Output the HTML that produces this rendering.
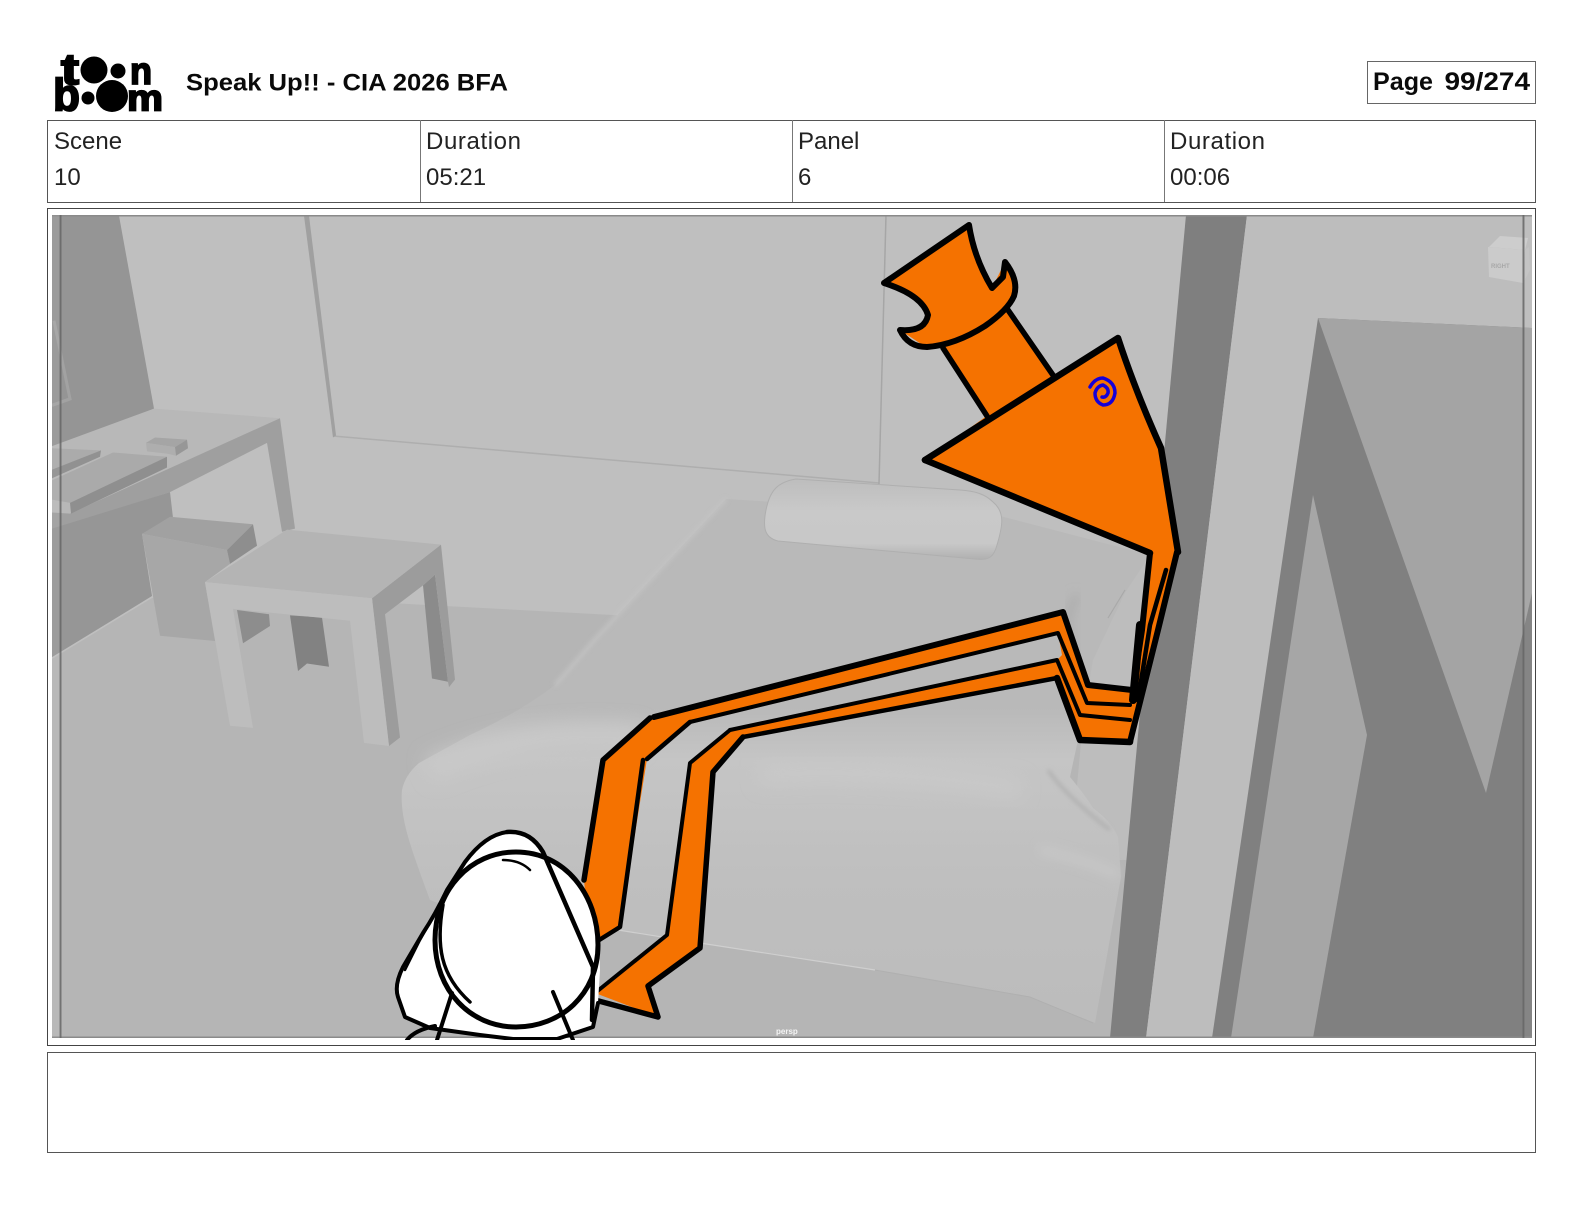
<!DOCTYPE html>
<html lang="en"><head><meta charset="utf-8"><title>Speak Up!! - CIA 2026 BFA</title>
<style>
html,body{margin:0;padding:0;background:#fff;width:1584px;height:1224px;overflow:hidden}
svg{display:block}
text{font-family:"Liberation Sans",sans-serif}
</style></head><body>
<svg xmlns="http://www.w3.org/2000/svg" width="1584" height="1224" viewBox="0 0 1584 1224">
<defs>
<clipPath id="img"><rect x="52" y="215" width="1480" height="823"/></clipPath>
<clipPath id="low"><rect x="300" y="700" width="400" height="340"/></clipPath>
<filter id="b2" x="-30%" y="-30%" width="160%" height="160%"><feGaussianBlur stdDeviation="2"/></filter>
<filter id="b4" x="-30%" y="-50%" width="160%" height="200%"><feGaussianBlur stdDeviation="5"/></filter>
<filter id="b9" x="-30%" y="-100%" width="160%" height="300%"><feGaussianBlur stdDeviation="9"/></filter>
<linearGradient id="pil" x1="0" y1="0" x2="0" y2="1"><stop offset="0" stop-color="#bdbdbd"/><stop offset=".4" stop-color="#c9c9c9"/><stop offset=".8" stop-color="#c8c8c8"/><stop offset="1" stop-color="#b0b0b0"/></linearGradient>
<linearGradient id="bed" gradientUnits="userSpaceOnUse" x1="0" y1="500" x2="0" y2="1020"><stop offset="0" stop-color="#b9b9b9"/><stop offset=".4" stop-color="#b9b9b9"/><stop offset=".5" stop-color="#c5c5c5"/><stop offset=".58" stop-color="#c3c3c3"/><stop offset=".72" stop-color="#bfbfbf"/><stop offset="1" stop-color="#bcbcbc"/></linearGradient>
</defs>
<rect width="1584" height="1224" fill="#fff"/>

<!-- logo -->
<g fill="#000">
<text x="61" y="84" font-size="44" font-weight="700" stroke="#000" stroke-width="2" textLength="18" lengthAdjust="spacingAndGlyphs">t</text>
<circle cx="94" cy="70" r="13.500"/><circle cx="118" cy="71" r="7.500"/>
<text x="130" y="84" font-size="38" font-weight="700" stroke="#000" stroke-width="1.800" textLength="22" lengthAdjust="spacingAndGlyphs">n</text>
<text x="53" y="110.500" font-size="45" font-weight="700" stroke="#000" stroke-width="1.800" textLength="27" lengthAdjust="spacingAndGlyphs">b</text>
<circle cx="88" cy="98" r="6.500"/><circle cx="112" cy="96" r="16"/>
<text x="127" y="110.500" font-size="37" font-weight="700" stroke="#000" stroke-width="1.800" textLength="36" lengthAdjust="spacingAndGlyphs">m</text>
</g>
<text x="186" y="90.500" font-size="24" font-weight="700" fill="#0a0a0a" textLength="322" lengthAdjust="spacingAndGlyphs">Speak Up!! - CIA 2026 BFA</text>

<!-- page box -->
<rect x="1367.500" y="61.500" width="168" height="42" fill="#fff" stroke="#666" stroke-width="1"/>
<text x="1373" y="90" font-size="25" font-weight="700" fill="#0a0a0a" textLength="60" lengthAdjust="spacingAndGlyphs">Page</text>
<text x="1444.500" y="90" font-size="25" font-weight="700" fill="#0a0a0a" textLength="85.500" lengthAdjust="spacingAndGlyphs">99/274</text>

<!-- info table -->
<rect x="47.500" y="120.500" width="1488" height="82" fill="#fff" stroke="#555" stroke-width="1"/>
<path d="M420.500 120v82M792.500 120v82M1164.500 120v82" stroke="#777" stroke-width="1"/>
<g font-size="24" fill="#222">
<text x="54" y="149">Scene</text><text x="54" y="185">10</text>
<text x="426" y="149" textLength="95" lengthAdjust="spacing">Duration</text><text x="426" y="185">05:21</text>
<text x="798" y="149">Panel</text><text x="798" y="185">6</text>
<text x="1170" y="149" textLength="95" lengthAdjust="spacing">Duration</text><text x="1170" y="185">00:06</text>
</g>

<!-- frame -->
<rect x="47.500" y="208.500" width="1488" height="837" fill="#fff" stroke="#444" stroke-width="1"/>
<rect x="47.500" y="1052.500" width="1488" height="100" fill="#fff" stroke="#555" stroke-width="1"/>

<!-- scene -->
<g clip-path="url(#img)">
<rect x="52" y="215" width="1480" height="823" fill="#bfbfbf"/>
<path d="M52 659 152 598 300 598 445 606 650 617 1130 640V1038H52Z" fill="#b5b5b5"/>
<path d="M333 436 879 483" stroke="#aeaeae" stroke-width="1.500" fill="none"/>
<path d="M886 215 879 484" stroke="#a6a6a6" stroke-width="1.500" fill="none"/>

<g transform="translate(0 205) scale(1 1.0714) translate(0 -205)">
<path d="M52 215H119L154 395 67 430H52Z" fill="#959595"/>
<path d="M304 215H309L336 420 333 422Z" fill="#a0a0a0"/>
<path d="M54 313 70 386 52 392" fill="none" stroke="#a2a2a2" stroke-width="3"/>
<path d="M52 430 154 395 280 404 70 493 52 493Z" fill="#b8b8b8"/>
<path d="M280 404 295 507 282 510 267 427 170 473 52 508V492L70 493Z" fill="#9f9f9f"/>
<path d="M52 507 170 473 173 497 142 512 152 570 52 627Z" fill="#969696"/>
<path d="M52 432 101 434 52 452Z" fill="#ababab"/><path d="M52 452 101 434 100 440 52 460Z" fill="#919191"/>
<path d="M52 462 113 436 167 440 70 483 52 480Z" fill="#aaa"/>
<path d="M70 483 167 440 167 450 71 493Z" fill="#8f8f8f"/>
<path d="M146 427 155 422 187 424 175 431Z" fill="#a5a5a5"/>
<path d="M146 427 175 431 176 439 167 437 147 435Z" fill="#aeaeae"/>
<path d="M175 431 187 424 188 432 176 439Z" fill="#979797"/>
<path d="M142 512 227 527 230 540 205 557 215 612 160 607Z" fill="#a7a7a7"/>
<path d="M142 512 170 496 253 503 227 527Z" fill="#a1a1a1"/>
<path d="M227 527 253 503 257 523 230 540Z" fill="#8e8e8e"/>
<path d="M237 583 269 587 270 598 243 614Z" fill="#8d8d8d"/>
<path d="M290 588 322 590 329 636 307 633 298 640Z" fill="#828282"/>
<path d="M435 550 448 650 432 647 423 560Z" fill="#8b8b8b"/>
<path d="M372 572 441 522 455 648 449 655 448 650 435 550 423 560 385 587 400 702 389 710Z" fill="#9c9c9c"/>
<path d="M205 557 287 508 441 522 372 572Z" fill="#b4b4b4"/>
<path d="M205 557 372 572 389 710 364 707 350 593 233 582 253 693 230 691Z" fill="#bdbdbd"/>
</g>

<path d="M1100 540H1190L1130 860H1070Z" fill="#bdbdbd"/>
<!-- bed -->
<path d="M726 499 L1000 516 L1150 555 L1125 593 L1093 660 L1088 690 L1078 740 L1073 763 L1070 777 Q1085 795 1093 808 Q1110 820 1118 837 L1121 877 L1095 1023 L1030 997 L875 970 L700 943 L618 930 L470 915 L430 900 Q415 860 409 840 Q400 810 402 790 Q405 775 419 763 L470 735 Q520 712 555 685 L594 640 Z" fill="url(#bed)"/>
<path d="M430 770 Q520 728 640 738" stroke="#c9c9c9" stroke-width="24" fill="none" filter="url(#b9)"/>
<path d="M760 775 Q900 768 1020 790" stroke="#c9c9c9" stroke-width="18" fill="none" filter="url(#b9)"/>
<path d="M1040 850 Q1085 860 1118 875" stroke="#c8c8c8" stroke-width="8" fill="none" filter="url(#b4)"/>
<path d="M1048 770 Q1065 795 1110 830" stroke="#aeaeae" stroke-width="3" fill="none" filter="url(#b2)"/>
<path d="M1078 595 Q1060 620 1075 655" stroke="#adadad" stroke-width="8" fill="none" filter="url(#b4)"/>
<path d="M1125 590 1108 618" stroke="#a9a9a9" stroke-width="1.200" fill="none"/>
<path d="M618 930 700 943 875 970" stroke="#cfcfcf" stroke-width="1.200" fill="none"/>
<path d="M875 970 1030 997 1093 1023" stroke="#b0b0b0" stroke-width="1" fill="none"/>
<path d="M726 499 L594 640 L555 685" stroke="#c4c4c4" stroke-width="3" fill="none" filter="url(#b2)"/>
<!-- pillow -->
<path d="M796 479 C778 482 770 490 766 510 C762 530 766 538 778 541 L975 559 C990 561 994 556 997 545 C1003 525 1005 512 993 502 C985 494 975 491 960 490Z" fill="url(#pil)" stroke="#afafaf" stroke-width="1"/>
<!-- pillar -->
<path d="M1186 215H1247L1146 1038H1110Z" fill="#7f7f7f"/>
<path d="M1247 215H1532V1038H1146Z" fill="#bdbdbd"/>
<path d="M1318 318 1532 328V1038H1212Z" fill="#808080"/>
<path d="M1318 318 1532 328V593L1486 793Z" fill="#a4a4a4"/>
<path d="M1313 495 1367 735 1313 1038H1231Z" fill="#a6a6a6"/>
<!-- cube -->
<path d="M1489 247 1500 236 1528 238 1525 250Z" fill="#cdcdcd"/>
<path d="M1488 247 1525 250 1523 283 1489 277Z" fill="#cbcbcb"/>
<path d="M1525 250 1529 247 1530 270 1523 283Z" fill="#c2c2c2"/>
<text x="1491" y="268" font-size="6" font-weight="700" fill="#a8a8a8">RIGHT</text>
<!-- gate -->
<rect x="52" y="215" width="1480" height="1.500" fill="#8a8a8a"/>
<rect x="52" y="1036.500" width="1480" height="1.500" fill="#8a8a8a"/>
<rect x="59.500" y="215" width="2" height="823" fill="#666" opacity=".85"/>
<rect x="1522.500" y="215" width="2" height="823" fill="#666" opacity=".85"/>
<rect x="52" y="215" width="8" height="823" fill="#fff" opacity=".06"/>
<rect x="1524" y="215" width="8" height="823" fill="#fff" opacity=".04"/>
<text x="776" y="1034" font-size="8" font-weight="700" fill="#f4f4f4">persp</text>
</g>

<!-- orange figure -->
<g stroke-linecap="round" stroke-linejoin="round">
<path fill="#f57200" d="M883 283 970 223 973 248 992 288 1005 262 1017 285 1008 308 1055 378 1118 338 1162 448 1178 552 1130 742 1080 740 1057 678 743 737 713 772 700 948 648 986 658 1017 595 993 667 935 690 763 730 730 1057 660 1062 655 1058 633 690 722 647 759 620 927 590 945 584 880 603 760 653 717 1063 612 1088 685 1132 690 1150 552 925 460 988 415 943 348 927 348 900 330 920 327 928 315 913 293Z"/>
<g fill="none" stroke="#000" stroke-width="6">
<path d="M884 283 Q925 255 969 225 Q974 258 992 288 L1003 277 1005 262 Q1019 280 1014 296 Q1008 310 985 326 Q955 345 927 347 Q908 347 900 330 Q925 332 928 315 Q922 295 884 283Z" />
<path d="M1008 310 1055 378M943 348 987 416" stroke-width="5.500"/>
<path d="M925 460 1118 338 Q1135 390 1161 448 L1178 552" stroke-width="6.500"/>
<path d="M925 460 1150 553" stroke-width="6.500"/>
<path d="M1150 553 1142 630 1133 690" stroke-width="6"/>
<path d="M1177 552 1158 630 1130 742" stroke-width="6"/>
<path d="M1166 570 1150 625 1138 700" stroke-width="4.500"/>
<path d="M1140 625 1133 700" stroke-width="8"/>
<path d="M654 717 1063 612 1088 685 1132 690" stroke-width="6"/>
<path d="M690 722 1058 633 1087 703 1130 705" stroke-width="4"/>
<path d="M730 730 1057 660 1080 715 1130 720" stroke-width="4"/>
<path d="M743 737 1057 678" stroke-width="4.500"/>
<path d="M1057 678 1080 740 1130 742" stroke-width="6.500"/>
<path d="M650 718 603 760 584 880" stroke-width="5.500"/>
<path d="M690 722 647 759" stroke-width="4.500"/>
<path d="M643 760 620 927 596 942" stroke-width="4.500"/>
<path d="M730 730 690 763 667 935 595 993" stroke-width="4"/>
<path d="M743 737 713 772 700 948 648 986 658 1017 595 1000" stroke-width="5.500"/>
</g>
<path d="M1090 387 Q1095 378 1103 378 Q1115 382 1115 393 Q1113 405 1103 405 Q1095 402 1095 393 Q1097 386 1103 385 Q1109 388 1108 393 Q1106 398 1102 397" fill="none" stroke="#1500d8" stroke-width="3.500"/>
</g>

<!-- head -->
<g clip-path="url(#low)" stroke-linecap="round" stroke-linejoin="round">
<path d="M507 832 Q490 834 467 860 Q455 878 447 890 Q435 915 423 933 L403 967 Q396 985 398 997 L405 1017 430 1028 480 1035 513 1040H557L593 1027 598 1003 600 970 Q600 930 578 895 L543 852 Q530 832 507 832Z" fill="#fff"/>
<g fill="none" stroke="#000">
<path d="M516 852 C565 852 598 895 598 945 C598 995 560 1027 516 1027 C470 1027 435 990 435 940 C435 890 470 852 516 852Z" fill="#fff" stroke-width="5"/>
<path d="M443 905 C436 945 440 975 470 1002" stroke-width="3.500"/>
<path d="M507 832 Q530 830 543 852 L593 967 L592 1020" stroke-width="4.500"/>
<path d="M507 832 Q485 835 465 862 L447 890 Q435 915 423 933 L403 967 Q394 985 398 997 L405 1017 430 1028 480 1035 513 1039 557 1039 593 1027 598 1003" stroke-width="4"/>
<path d="M440 905 L420 940 405 970" stroke-width="2.500"/>
<path d="M503 860 Q520 860 530 870" stroke-width="2.500"/>
<path d="M452 993 437 1040M553 992 573 1040M407 1040 Q415 1030 435 1026" stroke-width="4"/>
</g>
</g>
</svg>
</body></html>
